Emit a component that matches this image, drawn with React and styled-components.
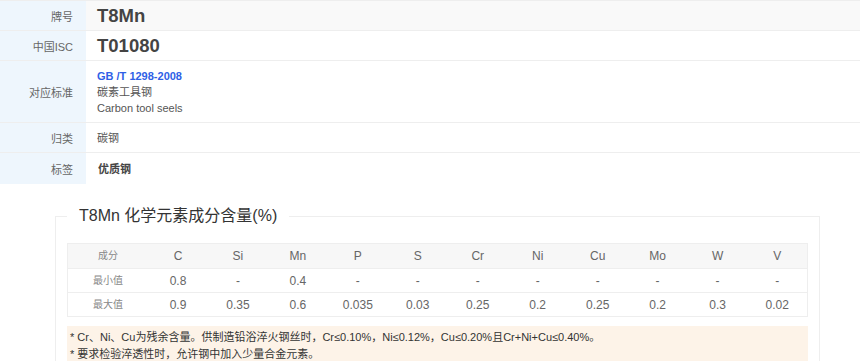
import React from 'react';
import styled, { createGlobalStyle } from 'styled-components';

const GlobalStyle = createGlobalStyle`
  body {
    margin: 0;
    background: #fff;
    font-family: "Liberation Sans", Arial, "Noto Sans CJK SC", sans-serif;
    color: #333;
  }
`;

const InfoTable = styled.div`
  border-top: 1px solid #eee;
`;

const InfoRow = styled.div`
  display: grid;
  grid-template-columns: 86px 1fr;
  border-bottom: 1px solid #eee;
  min-height: ${(p) => p.h}px;
  &:last-child {
    border-bottom: none;
  }
`;

const Label = styled.div`
  background: #eef6fd;
  color: #666;
  font-size: 11px;
  padding-right: 13px;
  display: flex;
  align-items: center;
  justify-content: flex-end;
`;

const Value = styled.div`
  background: ${(p) => (p.shade ? '#f9f9f9' : '#fff')};
  padding: 0 11px;
  display: flex;
  flex-direction: column;
  justify-content: center;
  color: #555;
  font-size: 11px;
  line-height: 16px;
`;

const BigCode = styled.span`
  font-size: 18.5px;
  line-height: 22px;
  font-weight: bold;
  color: #444;
`;

const StdLink = styled.a`
  color: #2f5fe6;
  font-weight: bold;
  text-decoration: none;
`;

const Tag = styled.span`
  font-weight: bold;
  color: #444;
  padding-left: 1px;
`;

const Box = styled.fieldset`
  margin: 21px 40px 0 55px;
  border: 1px solid #eee;
  border-bottom: none;
  padding: 0 11px;
  min-width: 0;
`;

const Legend = styled.legend`
  font-size: 16px;
  line-height: 22px;
  color: #333;
  padding: 0 12px;
`;

const Table = styled.table`
  width: 100%;
  border-collapse: collapse;
  margin-top: 16px;
  border: 1px solid #eee;
  table-layout: fixed;
`;

const Th = styled.th`
  background: #f7f7f7;
  font-weight: normal;
  color: #666;
  font-size: 12px;
  line-height: 16px;
  height: 24px;
  padding: 0;
  text-align: center;
  border-bottom: 1px solid #eee;
  &:first-child {
    width: 80px;
    color: #888;
    font-size: 10px;
  }
`;

const Td = styled.td`
  color: #666;
  font-size: 12px;
  line-height: 16px;
  height: 23px;
  padding: 0;
  text-align: center;
  border-bottom: 1px solid #eee;
  &:first-child {
    color: #888;
    font-size: 10px;
  }
`;

const Note = styled.div`
  margin-top: 9px;
  background: #fdf3e8;
  padding: 3px 3px 6px;
  font-size: 11px;
  line-height: 17px;
  color: #333;
`;

const elements = ['C', 'Si', 'Mn', 'P', 'S', 'Cr', 'Ni', 'Cu', 'Mo', 'W', 'V'];
const rows = [
  { name: '最小值', vals: ['0.8', '-', '0.4', '-', '-', '-', '-', '-', '-', '-', '-'] },
  { name: '最大值', vals: ['0.9', '0.35', '0.6', '0.035', '0.03', '0.25', '0.2', '0.25', '0.2', '0.3', '0.02'] },
];

export default function App() {
  return (
    <>
      <GlobalStyle />
      <InfoTable>
        <InfoRow h={29}>
          <Label>牌号</Label>
          <Value shade>
            <BigCode>T8Mn</BigCode>
          </Value>
        </InfoRow>
        <InfoRow h={29}>
          <Label>中国ISC</Label>
          <Value>
            <BigCode>T01080</BigCode>
          </Value>
        </InfoRow>
        <InfoRow h={61}>
          <Label>对应标准</Label>
          <Value>
            <StdLink href="#">GB /T 1298-2008</StdLink>
            <span>碳素工具钢</span>
            <span>Carbon tool seels</span>
          </Value>
        </InfoRow>
        <InfoRow h={29}>
          <Label>归类</Label>
          <Value>碳钢</Value>
        </InfoRow>
        <InfoRow h={31}>
          <Label>标签</Label>
          <Value>
            <Tag>优质钢</Tag>
          </Value>
        </InfoRow>
      </InfoTable>
      <Box>
        <Legend>T8Mn 化学元素成分含量(%)</Legend>
        <Table>
          <thead>
            <tr>
              <Th>成分</Th>
              {elements.map((e) => (
                <Th key={e}>{e}</Th>
              ))}
            </tr>
          </thead>
          <tbody>
            {rows.map((r) => (
              <tr key={r.name}>
                <Td>{r.name}</Td>
                {r.vals.map((v, i) => (
                  <Td key={i}>{v}</Td>
                ))}
              </tr>
            ))}
          </tbody>
        </Table>
        <Note>
          * Cr、Ni、Cu为残余含量。供制造铅浴淬火钢丝时，Cr≤0.10%，Ni≤0.12%，Cu≤0.20%且Cr+Ni+Cu≤0.40%。
          <br />* 要求检验淬透性时，允许钢中加入少量合金元素。
        </Note>
      </Box>
    </>
  );
}
